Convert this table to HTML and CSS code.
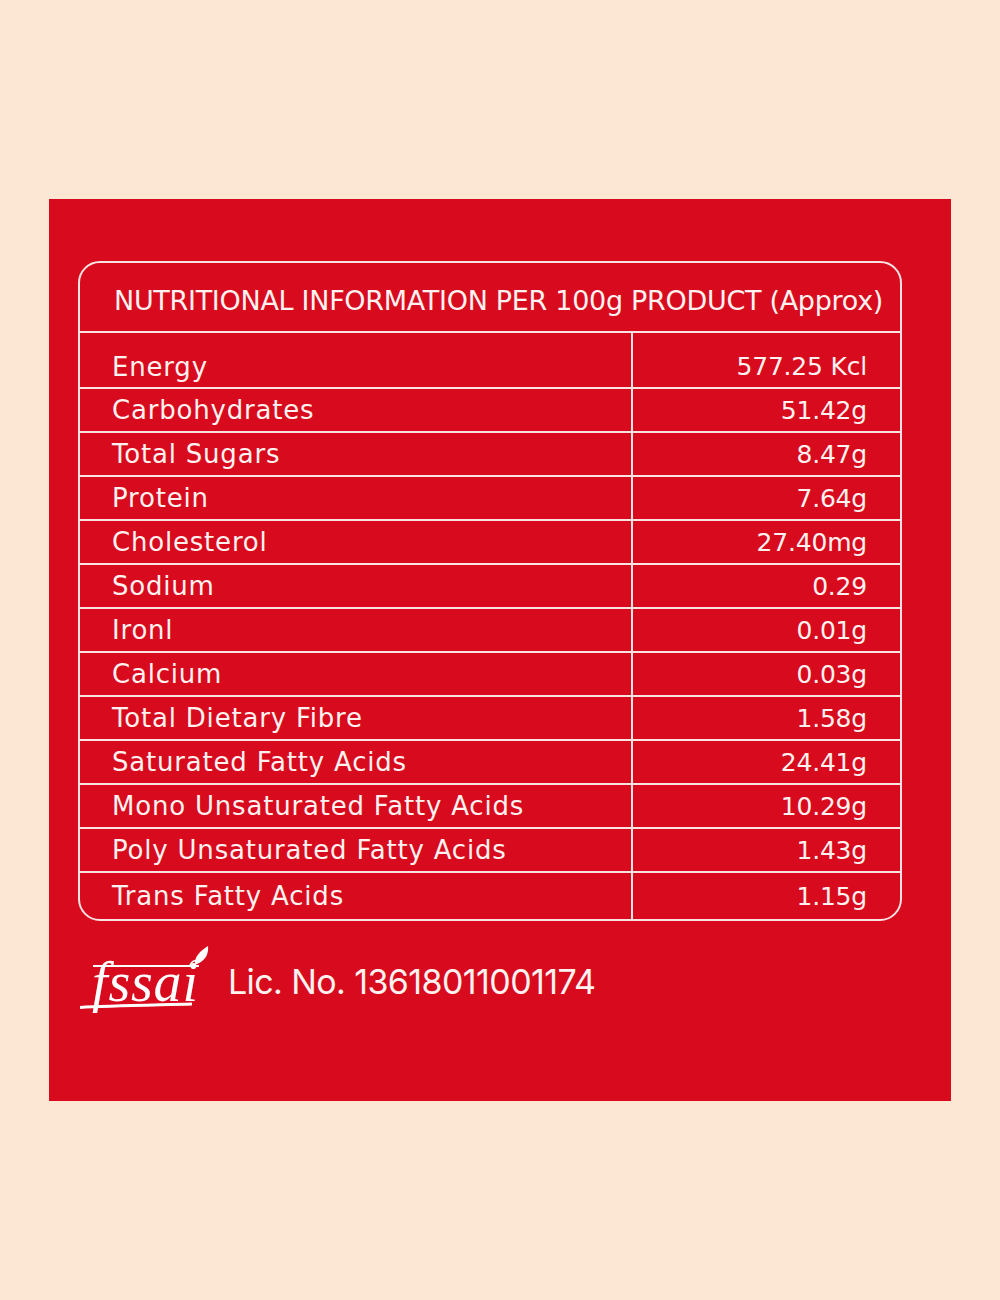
FILE: index.html
```html
<!DOCTYPE html>
<html lang="en">
<head>
<meta charset="utf-8">
<title>Nutritional Information</title>
<link rel="stylesheet" href="styles.css">
</head>
<body>
<div class="panel">
  <div class="table">
    <div class="head">NUTRITIONAL INFORMATION PER 100g PRODUCT (Approx)</div>
    <div class="row first"><div class="name">Energy</div><div class="val">577.25 Kcl</div></div>
    <div class="row"><div class="name">Carbohydrates</div><div class="val">51.42g</div></div>
    <div class="row"><div class="name">Total Sugars</div><div class="val">8.47g</div></div>
    <div class="row"><div class="name">Protein</div><div class="val">7.64g</div></div>
    <div class="row"><div class="name">Cholesterol</div><div class="val">27.40mg</div></div>
    <div class="row"><div class="name">Sodium</div><div class="val">0.29</div></div>
    <div class="row"><div class="name">Ironl</div><div class="val">0.01g</div></div>
    <div class="row"><div class="name">Calcium</div><div class="val">0.03g</div></div>
    <div class="row"><div class="name">Total Dietary Fibre</div><div class="val">1.58g</div></div>
    <div class="row"><div class="name">Saturated Fatty Acids</div><div class="val">24.41g</div></div>
    <div class="row"><div class="name">Mono Unsaturated Fatty Acids</div><div class="val">10.29g</div></div>
    <div class="row"><div class="name">Poly Unsaturated Fatty Acids</div><div class="val">1.43g</div></div>
    <div class="row last"><div class="name">Trans Fatty Acids</div><div class="val">1.15g</div></div>
  </div>
  <div class="lic">
    <svg class="fssai" width="136" height="70" viewBox="0 0 136 70" aria-label="fssai">
      <text x="14" y="58" class="fssai-text" textLength="106" lengthAdjust="spacing">fssai</text>
      <path d="M15 23 H121" stroke="#fff" stroke-width="2" fill="none"/>
      <path d="M2 64.5 C30 63 80 62 114 61" stroke="#fff" stroke-width="3" fill="none"/>
      <path d="M117 22 C116 14 122 8 130 3 C131 11 127 18 119 21 Z" fill="#fff"/>
      <path d="M112 22 C114 18 116 17 119 18" stroke="#fff" stroke-width="1.5" fill="none"/>
    </svg>
    <div class="lic-text">Lic. No. 13618011001174</div>
  </div>
</div>
</body>
</html>
```

FILE: styles.css
```css
html, body {
  margin: 0;
  padding: 0;
}
body {
  background: #fce6d4;
  font-family: "DejaVu Sans", "Inter", sans-serif;
  color: #fff2f0;
}
.panel {
  width: 902px;
  height: 902px;
  margin: 199px auto 0;
  background: #d80a1e;
  box-sizing: border-box;
  padding: 62px 49px 0 29px;
}
.table {
  border: 2px solid #fbe3e3;
  border-radius: 22px;
  overflow: hidden;
}
.head {
  height: 70px;
  box-sizing: border-box;
  border-bottom: 2px solid #fbe3e3;
  display: flex;
  align-items: center;
  padding-left: 34px;
  padding-top: 6px;
  font-size: 27px;
  letter-spacing: -0.3px;
  white-space: nowrap;
}
.row {
  display: grid;
  grid-template-columns: 553px 1fr;
  height: 42px;
  border-bottom: 2px solid #fbe3e3;
}
.row.first { height: 54px; }
.row.first .name, .row.first .val { padding-top: 13px; }
.row.last { height: 46px; border-bottom: none; }
.name {
  display: flex;
  align-items: center;
  padding-left: 32px;
  border-right: 2px solid #fbe3e3;
  white-space: nowrap;
  font-size: 26px;
  letter-spacing: 0.8px;
}
.val {
  display: flex;
  align-items: center;
  justify-content: flex-end;
  padding-right: 33px;
  white-space: nowrap;
  font-size: 25px;
  letter-spacing: -0.2px;
}
.lic {
  display: flex;
  align-items: center;
  margin-top: 22px;
}
.fssai {
  display: block;
  flex: none;
  overflow: visible;
}
.fssai-text {
  font-family: "Liberation Serif", "DejaVu Serif", serif;
  font-style: italic;
  font-size: 56px;
  fill: #fff;
}
.lic-text {
  margin-left: 14px;
  font-family: "Inter", "DejaVu Sans", sans-serif;
  font-size: 34px;
  letter-spacing: -0.6px;
  padding-top: 7px;
}
```
